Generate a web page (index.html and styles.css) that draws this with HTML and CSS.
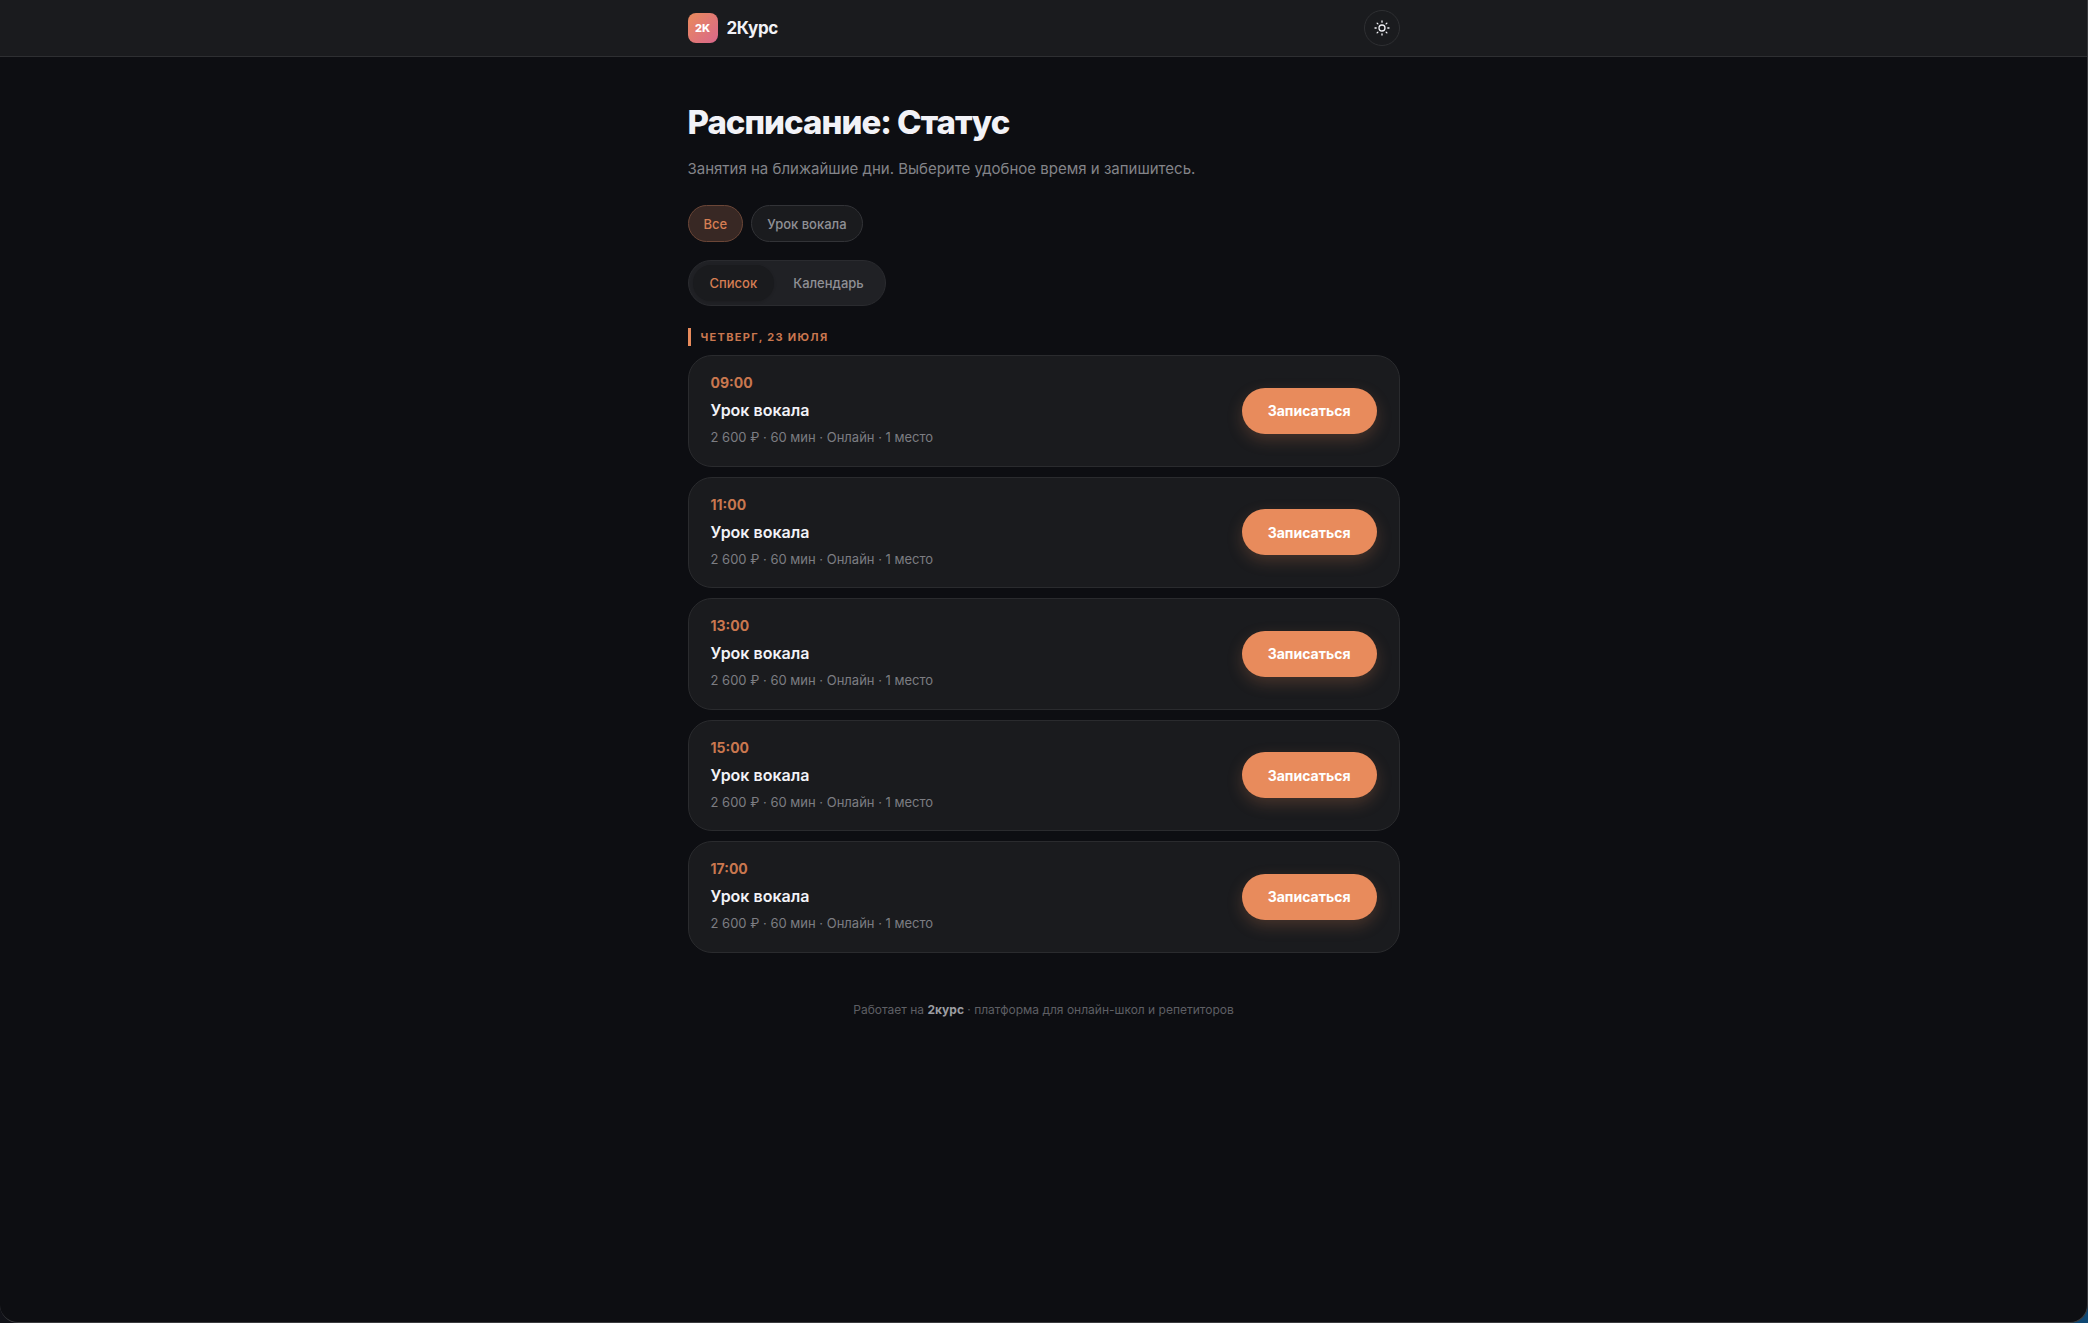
FILE: index.html
```html
<!DOCTYPE html>
<html lang="ru">
<head>
<meta charset="utf-8">
<meta name="viewport" content="width=device-width, initial-scale=1">
<title>Расписание: Статус</title>
<link rel="stylesheet" href="styles.css">
</head>
<body>
<div class="window">
<header class="topbar">
  <div class="container topbar-inner">
    <a class="brand" href="#"><span class="brand-mark">2K</span><span class="brand-name">2Курс</span></a>
    <button class="theme-toggle" type="button" aria-label="Сменить тему">
      <svg viewBox="0 0 18 18" width="18" height="18" fill="none" stroke="currentColor" stroke-width="1.3" stroke-linecap="round" aria-hidden="true"><circle cx="9" cy="9" r="3"/><path d="M9 2v1.2M9 14.8V16M2 9h1.2M14.8 9H16M4.1 4.1l.8.8M13.1 13.1l.8.8M4.1 13.9l.8-.8M13.1 4.9l.8-.8"/></svg>
    </button>
  </div>
</header>
<main class="container">
  <h1 class="title">Расписание: Статус</h1>
  <p class="lead">Занятия на ближайшие дни. Выберите удобное время и запишитесь.</p>
  <div class="filters">
    <button class="chip chip-active" type="button">Все</button>
    <button class="chip" type="button">Урок вокала</button>
  </div>
  <div class="switch">
    <button class="switch-item switch-item-active" type="button">Список</button>
    <button class="switch-item" type="button">Календарь</button>
  </div>
  <section>
    <h2 class="day">Четверг, 23 июля</h2>
    <ul class="slots">
      <li class="slot"><div class="slot-info"><time class="slot-time">09:00</time><h3 class="slot-name">Урок вокала</h3><p class="slot-meta">2 600 ₽ · 60 мин · Онлайн · 1 место</p></div><button class="book" type="button">Записаться</button></li>
      <li class="slot"><div class="slot-info"><time class="slot-time">11:00</time><h3 class="slot-name">Урок вокала</h3><p class="slot-meta">2 600 ₽ · 60 мин · Онлайн · 1 место</p></div><button class="book" type="button">Записаться</button></li>
      <li class="slot"><div class="slot-info"><time class="slot-time">13:00</time><h3 class="slot-name">Урок вокала</h3><p class="slot-meta">2 600 ₽ · 60 мин · Онлайн · 1 место</p></div><button class="book" type="button">Записаться</button></li>
      <li class="slot"><div class="slot-info"><time class="slot-time">15:00</time><h3 class="slot-name">Урок вокала</h3><p class="slot-meta">2 600 ₽ · 60 мин · Онлайн · 1 место</p></div><button class="book" type="button">Записаться</button></li>
      <li class="slot"><div class="slot-info"><time class="slot-time">17:00</time><h3 class="slot-name">Урок вокала</h3><p class="slot-meta">2 600 ₽ · 60 мин · Онлайн · 1 место</p></div><button class="book" type="button">Записаться</button></li>
    </ul>
  </section>
</main>
<footer class="footer">Работает на <a class="footer-link" href="#">2курс</a> · платформа для онлайн-школ и репетиторов</footer>
</div>
</body>
</html>
```
FILE: styles.css
```css
* {
  box-sizing: border-box;
}

body {
  margin: 0;
  background: linear-gradient(90deg, #111218 50%, #0d4672 50%);
  color: #f2f2f7;
  font-family: Inter, "Noto Sans", sans-serif;
  font-size: 14px;
}

button {
  font: inherit;
  cursor: pointer;
}

a {
  color: inherit;
  text-decoration: none;
}

h1, h2, h3, p, ul {
  margin: 0;
  padding: 0;
}

.window {
  min-height: 100vh;
  background: #0d0e12;
  border: solid #3a3b3e;
  border-width: 0 1px 1px 0;
  border-radius: 0 0 18px 18px;
}

.container {
  max-width: 760px;
  margin: 0 auto;
  padding: 0 24px;
}

.topbar {
  background: #1a1b1e;
  border-bottom: 1px solid #2e2f32;
}

.topbar-inner {
  display: flex;
  align-items: center;
  justify-content: space-between;
  height: 56px;
}

.brand {
  display: flex;
  align-items: center;
  gap: 9px;
}

.brand-mark {
  display: grid;
  place-items: center;
  width: 30px;
  height: 30px;
  border-radius: 8px;
  background: linear-gradient(135deg, #e98a5b, #d9678c);
  color: #fff;
  font-size: 11px;
  font-weight: 800;
}

.brand-name {
  font-size: 17px;
  font-weight: 700;
  letter-spacing: -0.02em;
}

.theme-toggle {
  display: grid;
  place-items: center;
  width: 36px;
  height: 36px;
  padding: 0;
  border: 1px solid #2e2f32;
  border-radius: 50%;
  background: none;
  color: #f2f2f7;
}

.title {
  padding-top: 43px;
  font-size: 33px;
  line-height: 44px;
  font-weight: 800;
  letter-spacing: -0.03em;
}

.lead {
  margin-top: 13px;
  color: #838489;
  font-size: 15px;
  line-height: 24px;
}

.filters {
  display: flex;
  gap: 8px;
  margin-top: 24px;
}

.chip {
  height: 37px;
  padding: 0 15px;
  border: 1px solid #323337;
  border-radius: 20px;
  background: #1a1b1e;
  color: #8f9095;
  font-size: 13px;
  font-weight: 500;
}

.chip-active {
  border-color: #6b4637;
  background: #382824;
  color: #d67e53;
}

.switch {
  display: inline-flex;
  gap: 2px;
  margin-top: 18px;
  padding: 4px;
  border: 1px solid #2a2b2f;
  border-radius: 24px;
  background: #202125;
}

.switch-item {
  height: 36px;
  padding: 0 17px;
  border: 0;
  border-radius: 18px;
  background: none;
  color: #8f9095;
  font-size: 13px;
  font-weight: 500;
}

.switch-item-active {
  background: #1a1b1e;
  box-shadow: 0 1px 3px rgba(0, 0, 0, 0.15);
  color: #d67e53;
}

.day {
  margin-top: 22px;
  padding-left: 10px;
  border-left: 3px solid #e88b5c;
  color: #c9774f;
  font-size: 11px;
  line-height: 18px;
  font-weight: 700;
  letter-spacing: 0.12em;
  text-transform: uppercase;
}

.slots {
  display: grid;
  gap: 10px;
  margin-top: 9px;
  list-style: none;
}

.slot {
  display: flex;
  align-items: center;
  justify-content: space-between;
  gap: 16px;
  padding: 18px 22px;
  border: 1px solid #2a2b2e;
  border-radius: 24px;
  background: #1a1b1e;
}

.slot-time {
  display: block;
  color: #c9774f;
  font-size: 14px;
  line-height: 18px;
  font-weight: 700;
}

.slot-name {
  margin: 6px 0;
  font-size: 16px;
  line-height: 24px;
  font-weight: 600;
}

.slot-meta {
  color: #7c7d82;
  font-size: 13px;
  line-height: 1.5;
}

.book {
  height: 46px;
  padding: 0 26px;
  border: 0;
  border-radius: 23px;
  background: #e88b5c;
  box-shadow: 0 6px 16px rgba(232, 139, 92, 0.22);
  color: #fff;
  font-size: 14px;
  font-weight: 700;
}

.footer {
  padding: 47px 24px;
  color: #5e5f64;
  font-size: 12px;
  line-height: 20px;
  text-align: center;
}

.footer-link {
  color: #9c9da2;
  font-weight: 700;
}
```
